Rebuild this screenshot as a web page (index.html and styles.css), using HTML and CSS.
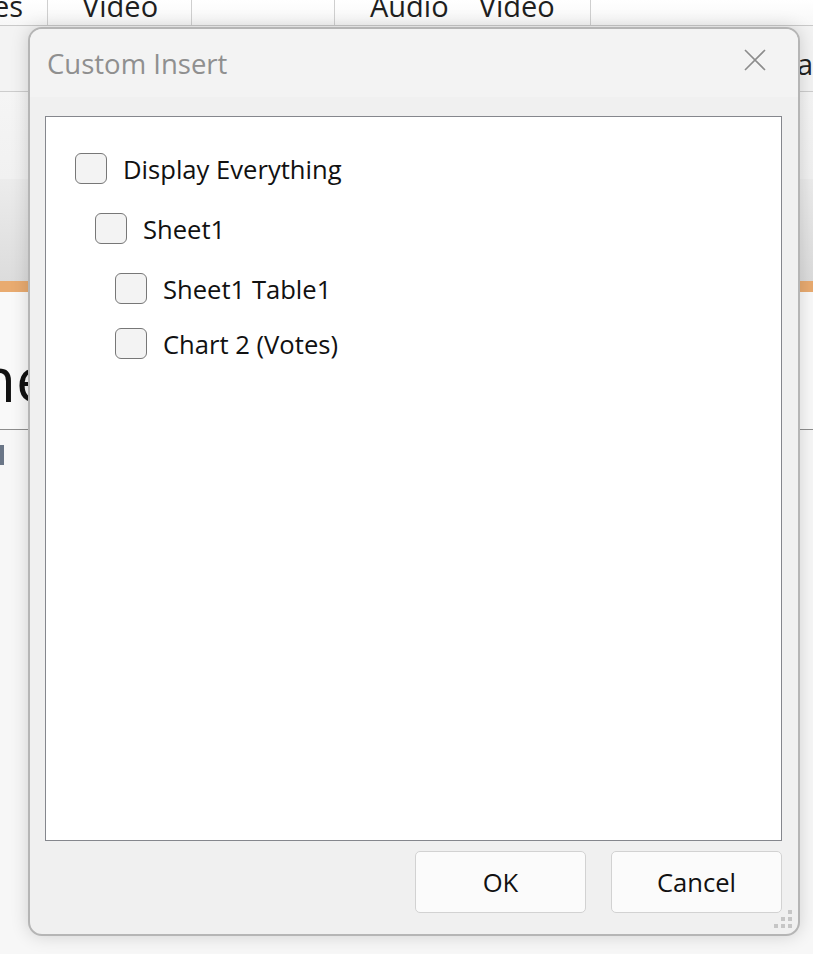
FILE: index.html
```html
<!DOCTYPE html>
<html>
<head>
<meta charset="utf-8">
<link rel="stylesheet" href="styles.css">
</head>
<body>
<div class="backdrop">
  <div class="tabs">
    <div class="tab tab-a"><span class="tab-label">es</span></div>
    <div class="tab tab-b"><span class="tab-label">Video</span></div>
    <div class="tab tab-c"></div>
    <div class="tab tab-d"><span class="tab-label">Audio</span><span class="tab-label">Video</span></div>
    <div class="tab tab-e"></div>
  </div>
  <div class="band band-1"><span class="edge-text">ar</span></div>
  <div class="band band-2"></div>
  <div class="band band-3"></div>
  <div class="band band-accent"></div>
  <div class="band band-4"><span class="big-text">ne</span></div>
  <div class="band band-5"><span class="cursor-mark"></span></div>
</div>

<div class="dialog">
  <div class="titlebar">
    <span class="title">Custom Insert</span>
    <svg class="close" width="24" height="22" viewBox="0 0 24 22">
      <path d="M2 1 L22 21 M22 1 L2 21" stroke="#8c8c8c" stroke-width="1.6" fill="none"/>
    </svg>
  </div>
  <div class="body">
    <div class="tree">
      <label class="item level-0"><span class="box"></span><span class="label">Display Everything</span></label>
      <label class="item level-1"><span class="box"></span><span class="label">Sheet1</span></label>
      <label class="item level-2"><span class="box"></span><span class="label">Sheet1 Table1</span></label>
      <label class="item level-2 tight"><span class="box"></span><span class="label">Chart 2 (Votes)</span></label>
    </div>
    <div class="actions">
      <button class="btn">OK</button>
      <button class="btn">Cancel</button>
    </div>
  </div>
  <div class="grip">
    <span></span><span></span><span class="on"></span>
    <span></span><span class="on"></span><span class="on"></span>
    <span class="on"></span><span class="on"></span><span class="on"></span>
  </div>
</div>
</body>
</html>
```
FILE: styles.css
```css
* { box-sizing: border-box; }
html, body {
  margin: 0;
  padding: 0;
  width: 813px;
  height: 954px;
  overflow: hidden;
  background: #f0f0f0;
  font-family: "Open Sans", "Noto Sans", sans-serif;
}

/* background application */
.backdrop {
  width: 813px;
  height: 954px;
  display: flex;
  flex-direction: column;
}
.tabs {
  height: 26px;
  display: flex;
  background: linear-gradient(#ffffff, #f7f7f7);
  border-bottom: 1px solid #c9c9c9;
  overflow: hidden;
}
.tab {
  border-right: 1px solid #cfcfcf;
  display: flex;
  gap: 30px;
  overflow: hidden;
}
.tab-a { margin-left: -7px; width: 55px; }
.tab-b { width: 144px; padding-left: 34px; }
.tab-c { width: 143px; }
.tab-d { width: 256px; padding-left: 35px; }
.tab-e { flex: 1; border-right: none; }
.tab-label {
  font-size: 29px;
  line-height: 29px;
  margin-top: -9px;
  color: #1f1f1f;
  white-space: nowrap;
}
.band { flex: none; position: relative; overflow: hidden; }
.band-1 {
  height: 66px;
  background: #f3f3f3;
  border-bottom: 1px solid #cdcdcd;
  display: flex;
  align-items: center;
}
.edge-text {
  margin-left: 797px;
  font-size: 29px;
  color: #222;
  margin-top: 10px;
}
.band-2 { height: 87px; background: linear-gradient(#f5f5f5, #f1f1f1); }
.band-3 { height: 102px; background: linear-gradient(#ececec, #dcdcdc); }
.band-accent { height: 11px; background: #e9ab70; }
.band-4 {
  height: 138px;
  background: #f9f9f9;
  border-bottom: 1px solid #8d8d8d;
  display: flex;
  align-items: flex-end;
}
.big-text {
  font-size: 62px;
  line-height: 62px;
  margin-left: -22px;
  margin-bottom: 20px;
  color: #111;
  white-space: nowrap;
}
.band-5 { flex: 1; background: #f7f7f7; padding-top: 15px; }
.cursor-mark {
  display: block;
  width: 4px;
  height: 20px;
  background: #6a7687;
}

/* dialog */
.dialog {
  position: absolute;
  left: 28px;
  top: 27px;
  width: 772px;
  height: 909px;
  background: #f0f0f0;
  border: 2px solid #b5b5b5;
  border-radius: 14px;
  box-shadow: 0 0 18px rgba(0, 0, 0, 0.16);
  display: flex;
  flex-direction: column;
  overflow: hidden;
}
.titlebar {
  height: 68px;
  flex: none;
  background: #f3f3f3;
  display: flex;
  align-items: center;
  justify-content: space-between;
  padding: 0 31px 0 17px;
}
.title {
  font-size: 27.5px;
  color: #8f8f8f;
  margin-top: 0;
}
.close { margin-top: -6px; }

.body {
  flex: 1;
  display: flex;
  flex-direction: column;
  padding: 19px 16px 0 15px;
}
.tree {
  height: 725px;
  background: #ffffff;
  border: 1px solid #85878d;
  padding: 36px 0 0 29px;
  display: flex;
  flex-direction: column;
}
.item {
  display: flex;
  align-items: center;
  height: 31px;
  margin-bottom: 29px;
  font-size: 25.6px;
  color: #111;
}
.item.tight { margin-top: -5px; }
.level-1 { padding-left: 20px; }
.level-2 { padding-left: 40px; }
.box {
  width: 32px;
  height: 31px;
  border: 1.5px solid #777777;
  border-radius: 6px;
  background: #f3f3f3;
  margin-right: 16px;
  flex: none;
}
.label { white-space: nowrap; margin-top: 1px; }

.actions {
  display: flex;
  justify-content: flex-end;
  gap: 25px;
  padding-top: 10px;
}
.btn {
  width: 171px;
  height: 62px;
  background: #fbfbfb;
  border: 1px solid #d2d2d2;
  border-radius: 5px;
  font-family: "Open Sans", "Noto Sans", sans-serif;
  font-size: 25.6px;
  color: #111;
  padding: 0;
}

.grip {
  position: absolute;
  right: 6px;
  bottom: 6px;
  display: grid;
  grid-template-columns: repeat(3, 4px);
  grid-auto-rows: 4px;
  gap: 3px;
}
.grip span { background: transparent; }
.grip span.on { background: #c6c6c6; }
```
